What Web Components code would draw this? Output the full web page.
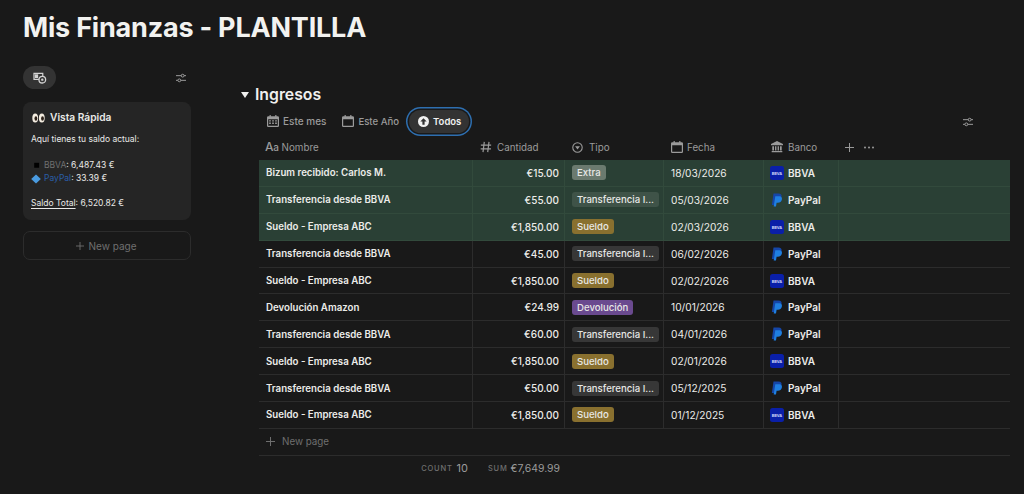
<!DOCTYPE html>
<html lang="es">
<head>
<meta charset="utf-8">
<title>Mis Finanzas - PLANTILLA</title>
<style>
  html, body { margin: 0; height: 100%; background: #191919; overflow: hidden; }
  body { font-family: Inter, "Liberation Sans", sans-serif; color: #e9e9e7; }
</style>
</head>
<body>
<finance-page></finance-page>

<script>
const ICONS = {
  month: '<svg viewBox="0 0 14 14" width="12" height="12"><path fill="currentColor" d="M3 0h1.400v1.500h5.200V0H11v1.500h1.500A1.500 1.500 0 0 1 14 3v9.500a1.500 1.500 0 0 1-1.500 1.500h-11A1.500 1.500 0 0 1 0 12.500V3a1.500 1.500 0 0 1 1.500-1.500H3zM1.400 5v7.600h11.200V5z"/><path fill="currentColor" d="M2.500 6h2v1.600h-2zM6 6h2v1.600H6zM9.500 6h2v1.600h-2zM2.500 8.800h2v1.600h-2zM6 8.800h2v1.600H6zM9.500 8.800h2v1.600h-2z"/></svg>',
  cal: '<svg viewBox="0 0 14 14" width="12" height="12"><path fill="currentColor" d="M3 0h1.400v1.500h5.200V0H11v1.500h1.500A1.500 1.500 0 0 1 14 3v9.500a1.500 1.500 0 0 1-1.500 1.500h-11A1.500 1.500 0 0 1 0 12.500V3a1.500 1.500 0 0 1 1.500-1.500H3zM1.400 5v7.600h11.200V5z"/></svg>',
  up: '<svg viewBox="0 0 14 14" width="11" height="11"><circle cx="7" cy="7" r="7" fill="currentColor"/><path fill="#333" d="M7 2.800 3 7h2.600v4h2.800V7H11z"/></svg>',
  text: '<span style="font:500 12px Inter,sans-serif;letter-spacing:-.3px;line-height:12px">A<span style="font-size:10px">a</span></span>',
  hash: '<svg viewBox="0 0 14 14" width="12" height="12"><path fill="none" stroke="currentColor" stroke-width="1.400" d="M5 1 3.500 13M10.500 1 9 13M1 4.700h12M.8 9.300h12"/></svg>',
  select: '<svg viewBox="0 0 14 14" width="11" height="11"><circle cx="7" cy="7" r="6" fill="none" stroke="currentColor" stroke-width="1.400"/><path fill="currentColor" d="M3.900 5.500h6.200L7 9.500z"/></svg>',
  bank: '<svg viewBox="0 0 14 14" width="12" height="12"><path fill="currentColor" d="M7 0 14 3.400V5H0V3.400zM1.500 6h2v5h-2zM4.700 6h1.600v5H4.700zM7.700 6h1.600v5H7.700zM10.500 6h2v5h-2zM.8 11.700h12.400V13H.8z"/></svg>',
  sliders: '<svg viewBox="0 0 12 12" width="10" height="10"><path fill="none" stroke="currentColor" stroke-width="1.200" d="M0 3.200h12M0 8.800h12"/><circle cx="8" cy="3.200" r="1.700" fill="#191919" stroke="currentColor" stroke-width="1.200"/><circle cx="4" cy="8.800" r="1.700" fill="#191919" stroke="currentColor" stroke-width="1.200"/></svg>'
};

class FinTab extends HTMLElement {
  constructor() {
    super();
    this.attachShadow({ mode: 'open' });
  }
  connectedCallback() {
    const icon = ICONS[this.getAttribute('icon')];
    this.shadowRoot.innerHTML = `
      <style>
        :host { display: inline-flex; align-items: center; gap: 4px; height: 24px; padding: 0 8px; font-size: 10px; font-weight: 500; color: #9b9b9b; border-radius: 13px; }
        :host([active]) { color: #f0f0f0; background: #333; height: 23px; box-shadow: 0 0 0 1.500px #191919, 0 0 0 3px #2e6fb0; padding: 0 8px 0 9px; font-weight: 600; margin-left: 2px; font-size: 9.500px; }
        svg { display: block; }
      </style>
      ${icon}<slot></slot>`;
  }
}
customElements.define('fin-tab', FinTab);

class FinTag extends HTMLElement {
  constructor() {
    super();
    this.attachShadow({ mode: 'open' });
    this.shadowRoot.innerHTML = `
      <style>
        :host { display: inline-block; height: 15px; line-height: 15px; padding: 0 5px; border-radius: 3px; font-size: 9.600px; font-weight: 500; color: #e8e8e6; white-space: nowrap; background: #373737; }
        :host([kind="Extra"]) { background: #6b7a6f; }
        :host([kind="Sueldo"]) { background: #89702f; }
        :host([kind="Devolución"]) { background: #6a4a8f; }
        :host([kind="Transferencia"]) { background: #373737; }
        :host([green][kind="Transferencia"]) { background: #3f5348; }
      </style>
      <slot></slot>`;
  }
}
customElements.define('fin-tag', FinTag);

class BankLogo extends HTMLElement {
  constructor() {
    super();
    this.attachShadow({ mode: 'open' });
  }
  connectedCallback() {
    const paypal = this.getAttribute('bank') === 'PayPal';
    this.shadowRoot.innerHTML = `
      <style>
        :host { display: inline-flex; align-items: center; gap: 4px; font-size: 10px; font-weight: 600; color: #ecece9; }
        .logo { width: 14px; height: 14px; display: block; flex: none; }
      </style>
      ${paypal
        ? `<svg class="logo" viewBox="0 0 14 14"><path fill="#1546a8" d="M3.500 .5h5c2.400 0 3.500 1.400 3 3.500-.6 2.400-2.300 3.500-4.500 3.500H5.700l-.8 4.500H1.900z"/><path fill="#1f7fe0" d="M5.300 3.300h4.300c1.700.3 2.700 1.400 2.300 3.200-.5 2.200-2 3.200-4 3.200H6.600L6 13.500H3.700z"/></svg>`
        : `<svg class="logo" viewBox="0 0 14 14"><rect width="14" height="14" rx="2.500" fill="#0a1fa8"/><text x="7" y="8.500" text-anchor="middle" font-family="Inter, sans-serif" font-size="3.800" font-weight="700" fill="#d5dbf8">BBVA</text></svg>`}
      <slot></slot>`;
  }
}
customElements.define('bank-logo', BankLogo);

class FinRow extends HTMLElement {
  constructor() {
    super();
    this.attachShadow({ mode: 'open' });
  }
  connectedCallback() {
    const a = n => this.getAttribute(n);
    const green = this.hasAttribute('green');
    this.shadowRoot.innerHTML = `
      <style>
        :host { display: grid; grid-template-columns: var(--cols); height: 26.900px; box-sizing: border-box; border-bottom: 1px solid #2c2c2c; font-size: 10px; color: #ecece9; }
        :host([green]) { background: #2a4035; border-bottom-color: #324a3c; }
        div { display: flex; align-items: center; padding: 0 6px; border-right: 1px solid #2c2c2c; min-width: 0; }
        :host([green]) div { border-right-color: #324a3c; }
        div:last-child { border-right: 0; }
        .name { font-weight: 600; font-size: 9.700px; padding-left: 7px; }
        .num { justify-content: flex-end; padding-right: 5px; font-weight: 500; }
        .tag, .date { padding-left: 7px; }
        .date { font-weight: 400; font-size: 10.200px; }
      </style>
      <div class="name">${a('name')}</div>
      <div class="num">${a('amount')}</div>
      <div class="tag"><fin-tag kind="${a('kind')}" ${green ? 'green' : ''}>${a('tag')}</fin-tag></div>
      <div class="date">${a('date')}</div>
      <div><bank-logo bank="${a('bank')}">${a('bank')}</bank-logo></div>
      <div></div>`;
  }
}
customElements.define('fin-row', FinRow);

class FinTable extends HTMLElement {
  constructor() {
    super();
    this.attachShadow({ mode: 'open' });
  }
  connectedCallback() {
    const T = 'Transferencia desde BBVA', S = 'Sueldo - Empresa ABC', L = 'Transferencia I...';
    const rows = [
      ['Bizum recibido: Carlos M.', '€15.00', 'Extra', 'Extra', '18/03/2026', 'BBVA', 1],
      [T, '€55.00', 'Transferencia', L, '05/03/2026', 'PayPal', 1],
      [S, '€1,850.00', 'Sueldo', 'Sueldo', '02/03/2026', 'BBVA', 1],
      [T, '€45.00', 'Transferencia', L, '06/02/2026', 'PayPal'],
      [S, '€1,850.00', 'Sueldo', 'Sueldo', '02/02/2026', 'BBVA'],
      ['Devolución Amazon', '€24.99', 'Devolución', 'Devolución', '10/01/2026', 'PayPal'],
      [T, '€60.00', 'Transferencia', L, '04/01/2026', 'PayPal'],
      [S, '€1,850.00', 'Sueldo', 'Sueldo', '02/01/2026', 'BBVA'],
      [T, '€50.00', 'Transferencia', L, '05/12/2025', 'PayPal'],
      [S, '€1,850.00', 'Sueldo', 'Sueldo', '01/12/2025', 'BBVA']
    ];
    const head = [['text', 'Nombre', 3], ['hash', 'Cantidad', 5], ['select', 'Tipo', 6], ['cal', 'Fecha', 4], ['bank', 'Banco', 5]];
    this.shadowRoot.innerHTML = `
      <style>
        :host { display: block; --cols: 214px 92px 99px 100px 75px 1fr; }
        .head { display: grid; grid-template-columns: var(--cols); height: 26px; font-size: 9.800px; color: #9b9b9b; }
        .head > div { display: flex; align-items: center; padding: 0 7px; }
        .head > div:first-child { padding-left: 6px; }
        .tools { gap: 10px; padding-left: 6px !important; }
        .new { display: flex; align-items: center; gap: 7px; height: 26.900px; box-sizing: border-box; padding-left: 7px; border-bottom: 1px solid #2c2c2c; font-size: 9.800px; color: #6f6f6f; }
        .foot { display: grid; grid-template-columns: var(--cols); height: 25px; }
        .calc { display: flex; align-items: center; justify-content: flex-end; gap: 4px; padding-right: 5px; font-size: 10.400px; color: #9b9b9b; }
        .calc small { font-size: 7.500px; letter-spacing: .8px; color: #6f6f6f; font-weight: 500; }
        .calc b { font-weight: 400; }
        .calc:first-child b { font-size: 11px; }
        .calc + .calc { gap: 3px; }
        svg { display: block; flex: none; }
      </style>
      <div class="head">
        ${head.map(([i, t, g]) => `<div style="gap:${g}px">${ICONS[i]}<span>${t}</span></div>`).join('')}
        <div class="tools">
          <svg viewBox="0 0 10 10" width="9" height="9"><path stroke="currentColor" stroke-width="1.100" d="M5 0v10M0 5h10"/></svg>
          <svg viewBox="0 0 10 3" width="10" height="3"><circle cx="1" cy="1.500" r="1" fill="currentColor"/><circle cx="5" cy="1.500" r="1" fill="currentColor"/><circle cx="9" cy="1.500" r="1" fill="currentColor"/></svg>
        </div>
      </div>
      ${rows.map(r => `<fin-row name="${r[0]}" amount="${r[1]}" kind="${r[2]}" tag="${r[3]}" date="${r[4]}" bank="${r[5]}" ${r[6] ? 'green' : ''}></fin-row>`).join('')}
      <div class="new">
        <svg viewBox="0 0 10 10" width="9" height="9"><path stroke="currentColor" stroke-width="1.100" d="M5 0v10M0 5h10"/></svg>
        <span>New page</span>
      </div>
      <div class="foot">
        <div class="calc"><small>COUNT</small><b>10</b></div>
        <div class="calc"><small>SUM</small><b>€7,649.99</b></div>
      </div>`;
  }
}
customElements.define('fin-table', FinTable);

class FinSidebar extends HTMLElement {
  constructor() {
    super();
    this.attachShadow({ mode: 'open' });
    this.shadowRoot.innerHTML = `
      <style>
        :host { display: flex; flex-direction: column; }
        .top { display: flex; align-items: center; justify-content: space-between; height: 23px; padding-right: 5px; color: #9b9b9b; }
        .pill { width: 33px; height: 23px; border-radius: 12px; background: #333; display: flex; align-items: center; justify-content: center; color: #d4d4d4; }
        .card { margin-top: 13px; height: 118px; box-sizing: border-box; padding: 8px 8px; background: #252525; border-radius: 8px; font-size: 8.500px; line-height: 13px; color: #e9e9e7; }
        .card h3 { display: flex; align-items: center; gap: 5px; margin: 0 0 8px 1px; font-size: 10.200px; line-height: 15px; font-weight: 600; }
        p { margin: 0; display: flex; align-items: center; height: 13px; white-space: pre; }
        p svg { margin-right: 3px; }
        .gap { height: 13px; }
        .gap.b { height: 12px; }
        .bbva { color: #6f6f6f; }
        .pp { color: #2a5ea8; }
        u { text-underline-offset: 2px; }
        .new { margin-top: 11px; height: 29px; box-sizing: border-box; padding-right: 2px; border: 1px solid #2c2c2c; border-radius: 7px; display: flex; align-items: center; justify-content: center; gap: 5px; font-size: 10px; color: #6f6f6f; }
        svg { display: block; flex: none; }
      </style>
      <div class="top">
        <div class="pill">
          <svg viewBox="0 0 15 13" width="14" height="12"><path fill="none" stroke="currentColor" stroke-width="1.300" d="M1 1.500h9.500V8H1z"/><path fill="currentColor" d="M2 2.500h3.500v4H2z"/><circle cx="10" cy="8.300" r="3.600" fill="#333" stroke="currentColor" stroke-width="1.400"/><circle cx="10" cy="8.300" r="1.300" fill="currentColor"/></svg>
        </div>
        ${ICONS.sliders}
      </div>
      <div class="card">
        <h3>
          <svg viewBox="0 0 13 10" width="13" height="10"><ellipse cx="3.200" cy="5" rx="2.900" ry="4.500" fill="#f3ece0"/><ellipse cx="9.800" cy="5" rx="2.900" ry="4.500" fill="#f3ece0"/><ellipse cx="3.900" cy="5.500" rx="1.400" ry="2.200" fill="#2c2018"/><ellipse cx="10.500" cy="5.500" rx="1.400" ry="2.200" fill="#2c2018"/></svg>
          <span>Vista Rápida</span>
        </h3>
        <p>Aquí tienes tu saldo actual:</p>
        <div class="gap"></div>
        <p><svg viewBox="0 0 10 10" width="10" height="9"><rect x="3" y="2" width="5.500" height="5.500" fill="#000"/></svg><span class="bbva">BBVA</span><span>: 6,487.43 €</span></p>
        <p><svg viewBox="0 0 10 10" width="10" height="10"><path fill="#4a9be0" d="M5 .5 9.800 5 5 9.500.2 5z"/></svg><span class="pp">PayPal</span><span>: 33.39 €</span></p>
        <div class="gap b"></div>
        <p><u>Saldo Total</u><span>: 6,520.82 €</span></p>
      </div>
      <div class="new">
        <svg viewBox="0 0 10 10" width="8" height="8"><path stroke="currentColor" stroke-width="1.100" d="M5 0v10M0 5h10"/></svg>
        <span>New page</span>
      </div>`;
  }
}
customElements.define('fin-sidebar', FinSidebar);

class FinancePage extends HTMLElement {
  constructor() {
    super();
    this.attachShadow({ mode: 'open' });
    this.shadowRoot.innerHTML = `
      <style>
        :host { display: block; padding: 10px 14px 0 23px; }
        h1 { margin: 0; font-size: 27px; line-height: 36px; font-weight: 700; color: #f2f2f0; letter-spacing: -.2px; }
        .cols { display: grid; grid-template-columns: 168px 1fr; column-gap: 50px; margin-top: 20px; }
        section { margin-top: 16px; }
        h2 { display: flex; align-items: center; gap: 6px; margin: 0; height: 24px; font-size: 15.800px; font-weight: 600; color: #f0f0ee; }
        .tri { width: 0; height: 0; border: 4px solid transparent; border-top: 6px solid #f0f0ee; border-bottom: 0; margin-top: 1px; }
        .body { margin-left: 18px; }
        .tabs { display: flex; align-items: center; height: 26px; margin-top: 2px; padding-right: 37px; color: #9b9b9b; }
        .tabs .sl { margin-left: auto; }
      </style>
      <h1>Mis Finanzas - PLANTILLA</h1>
      <div class="cols">
        <fin-sidebar></fin-sidebar>
        <section>
          <h2><span class="tri"></span>Ingresos</h2>
          <div class="body">
            <div class="tabs">
              <fin-tab icon="month">Este mes</fin-tab>
              <fin-tab icon="cal" style="font-size:9.600px">Este Año</fin-tab>
              <fin-tab icon="up" active>Todos</fin-tab>
              <span class="sl">${ICONS.sliders}</span>
            </div>
            <fin-table></fin-table>
          </div>
        </section>
      </div>`;
  }
}
customElements.define('finance-page', FinancePage);
</script>
</body>
</html>
